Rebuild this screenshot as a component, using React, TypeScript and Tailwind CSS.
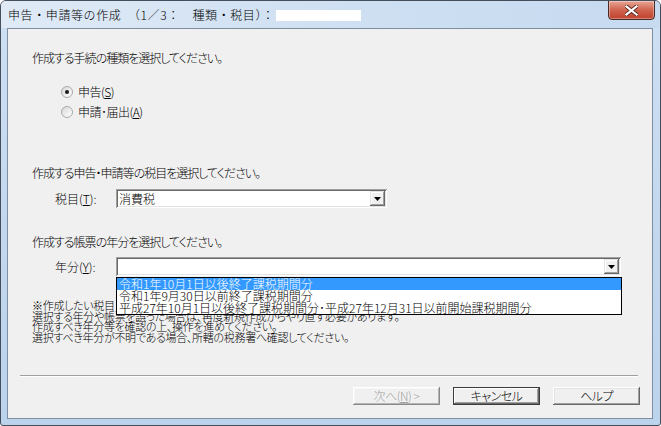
import React from "react";

const font = "[font-family:'Noto_Sans_CJK_JP','Noto_Sans',sans-serif]";

function U({ c }: { c: string }) {
  return <span className="underline underline-offset-[1px] decoration-[1px]">{c}</span>;
}

function Radio({ checked, children }: { checked?: boolean; children: React.ReactNode }) {
  return (
    <div className="flex items-center h-[14px]">
      <div className="w-[12px] h-[12px] rounded-full border border-[#a9a9a9] bg-gradient-to-br from-[#d8d8d8] to-[#ffffff] flex items-center justify-center">
        {checked && <div className="w-[4px] h-[4px] rounded-full bg-[#1a1a1a]" />}
      </div>
      <div className="ml-[5px] tracking-[-0.5px]">{children}</div>
    </div>
  );
}

function Arrow() {
  return (
    <div className="w-[15px] h-full bg-[#f0f0f0] flex items-center justify-center shadow-[inset_-1px_-1px_#696969,inset_1px_1px_#e3e3e3,inset_-2px_-2px_#a0a0a0,inset_2px_2px_#ffffff]">
      <svg width="7" height="4" viewBox="0 0 7 4">
        <polygon points="0,0 7,0 3.5,4" fill="#000" />
      </svg>
    </div>
  );
}

function Combo({ width, value }: { width: string; value?: string }) {
  return (
    <div
      className={`${width} h-[19px] bg-white flex items-stretch p-[2px] shadow-[inset_1px_1px_#a0a0a0,inset_-1px_-1px_#ffffff,inset_2px_2px_#696969,inset_-2px_-2px_#e3e3e3]`}
    >
      <div className="flex-1 pl-[1px] leading-[15px]">{value}</div>
      <Arrow />
    </div>
  );
}

function Btn({ children, variant }: { children: React.ReactNode; variant?: "default" | "disabled" }) {
  const base =
    "w-[87px] h-[18px] flex items-center justify-center bg-[#f0f0f0] leading-[12px] tracking-[-0.5px]";
  if (variant === "default")
    return (
      <div
        className={`${base} border border-[#3c3c3c] shadow-[inset_-1px_-1px_#696969,inset_1px_1px_#ffffff,inset_-2px_-2px_#a0a0a0]`}
      >
        {children}
      </div>
    );
  if (variant === "disabled")
    return (
      <div
        className={`${base} text-[#a3a3a3] shadow-[inset_-1px_-1px_#8a8a8a,inset_1px_1px_#ffffff,inset_-2px_-2px_#b4b4b4,inset_2px_2px_#f6f6f6]`}
      >
        {children}
      </div>
    );
  return (
    <div
      className={`${base} shadow-[inset_-1px_-1px_#696969,inset_1px_1px_#ffffff,inset_-2px_-2px_#a0a0a0,inset_2px_2px_#e3e3e3]`}
    >
      {children}
    </div>
  );
}

export default function App() {
  return (
    <div
      className={`w-[661px] h-[426px] border border-[#454f5c] rounded-t-[6px] rounded-b-[3px] bg-gradient-to-b from-[#cfe0f3] via-[#c3d8ef] to-[#bcd3ec] flex flex-col text-[12px] text-black font-light ${font} overflow-hidden`}
    >
      {/* title bar */}
      <div className="h-[27px] flex items-start relative bg-gradient-to-r from-[#dfeaf6] via-[#cfe0f2] to-[#c6daf0]">
        <div className="mt-[7px] ml-[7px] flex items-center leading-[14px] text-[12px] tracking-[0.6px] whitespace-nowrap">
          <span>申告・申請等の作成　（1／3：　種類・税目）：</span>
          <span className="ml-[1px] w-[85px] h-[11px] bg-white inline-block" />
        </div>
        <div className="ml-auto mr-[5px] -mt-px w-[47px] h-[20px] rounded-b-[4px] border border-[#4a2a24] bg-gradient-to-b from-[#e8a596] via-[#d0634f] to-[#c0412c] flex items-center justify-center shadow-[inset_0_0_0_1px_rgba(255,255,255,0.35)]">
          <svg width="13" height="11" viewBox="0 0 13 11">
            <path
              d="M1.5 1.5 L11.5 9.5 M11.5 1.5 L1.5 9.5"
              stroke="#5a2a22"
              strokeWidth="4"
              strokeLinecap="square"
            />
            <path
              d="M1.5 1.5 L11.5 9.5 M11.5 1.5 L1.5 9.5"
              stroke="#ffffff"
              strokeWidth="2.2"
              strokeLinecap="square"
            />
          </svg>
        </div>
      </div>

      {/* client area */}
      <div className="ml-[6px] mr-[7px] h-[391px] border border-[#7f8ea0] bg-[#f0f0f0] flex flex-col [font-feature-settings:'palt']">
        <div className="mt-[23px] ml-[24px] leading-[12px] tracking-[-1px]">作成する手続の種類を選択してください。</div>

        <div className="mt-[21px] ml-[53px] flex flex-col gap-[6px] leading-[12px]">
          <Radio checked>
            申告(<U c="S" />)
          </Radio>
          <Radio>
            申請･届出(<U c="A" />)
          </Radio>
        </div>

        <div className="mt-[48px] ml-[24px] leading-[12px] tracking-[-1px]">作成する申告・申請等の税目を選択してください。</div>

        <div className="mt-[10px] flex items-center">
          <div className="ml-[47px] w-[61px] leading-[12px]">
            税目(<U c="T" />):
          </div>
          <Combo width="w-[271px]" value="消費税" />
        </div>

        <div className="mt-[28px] ml-[24px] leading-[12px] tracking-[-1px]">作成する帳票の年分を選択してください。</div>

        <div className="mt-[9px] flex items-center relative z-10">
          <div className="ml-[47px] w-[61px] leading-[12px]">
            年分(<U c="Y" />):
          </div>
          <div className="relative">
            <Combo width="w-[505px]" />
            <div className="absolute left-0 top-[20px] w-[506px] border border-black bg-white flex flex-col">
              <div className="h-[12px] leading-[12px] bg-[#3399ff] text-white pl-[2px] whitespace-nowrap">
                令和1年10月1日以後終了課税期間分
              </div>
              <div className="h-[12px] leading-[12px] pl-[2px] whitespace-nowrap">令和1年9月30日以前終了課税期間分</div>
              <div className="h-[12px] leading-[12px] pl-[2px] whitespace-nowrap">
                平成27年10月1日以後終了課税期間分･平成27年12月31日以前開始課税期間分
              </div>
            </div>
          </div>
        </div>

        <div className="mt-[24px] ml-[24px] text-[11px] leading-[10.5px] tracking-[-0.3px] flex flex-col whitespace-nowrap">
          <div>※作成したい税目・年分の帳票であることを確認してください。</div>
          <div>選択する年分や帳票を誤った場合は、再度新規作成からやり直す必要があります。</div>
          <div>作成すべき年分等を確認の上、操作を進めてください。</div>
          <div>選択すべき年分が不明である場合、所轄の税務署へ確認してください。</div>
        </div>

        <div className="mt-[33px] ml-[12px] mr-[14px] h-[2px] border-t border-[#a0a0a0] border-b border-b-white" />

        <div className="mt-[10px] flex justify-end gap-[13px] pr-[12px]">
          <Btn variant="disabled">
            次へ(<U c="N" />) &gt;
          </Btn>
          <Btn variant="default">キャンセル</Btn>
          <Btn>ヘルプ</Btn>
        </div>
      </div>
    </div>
  );
}
